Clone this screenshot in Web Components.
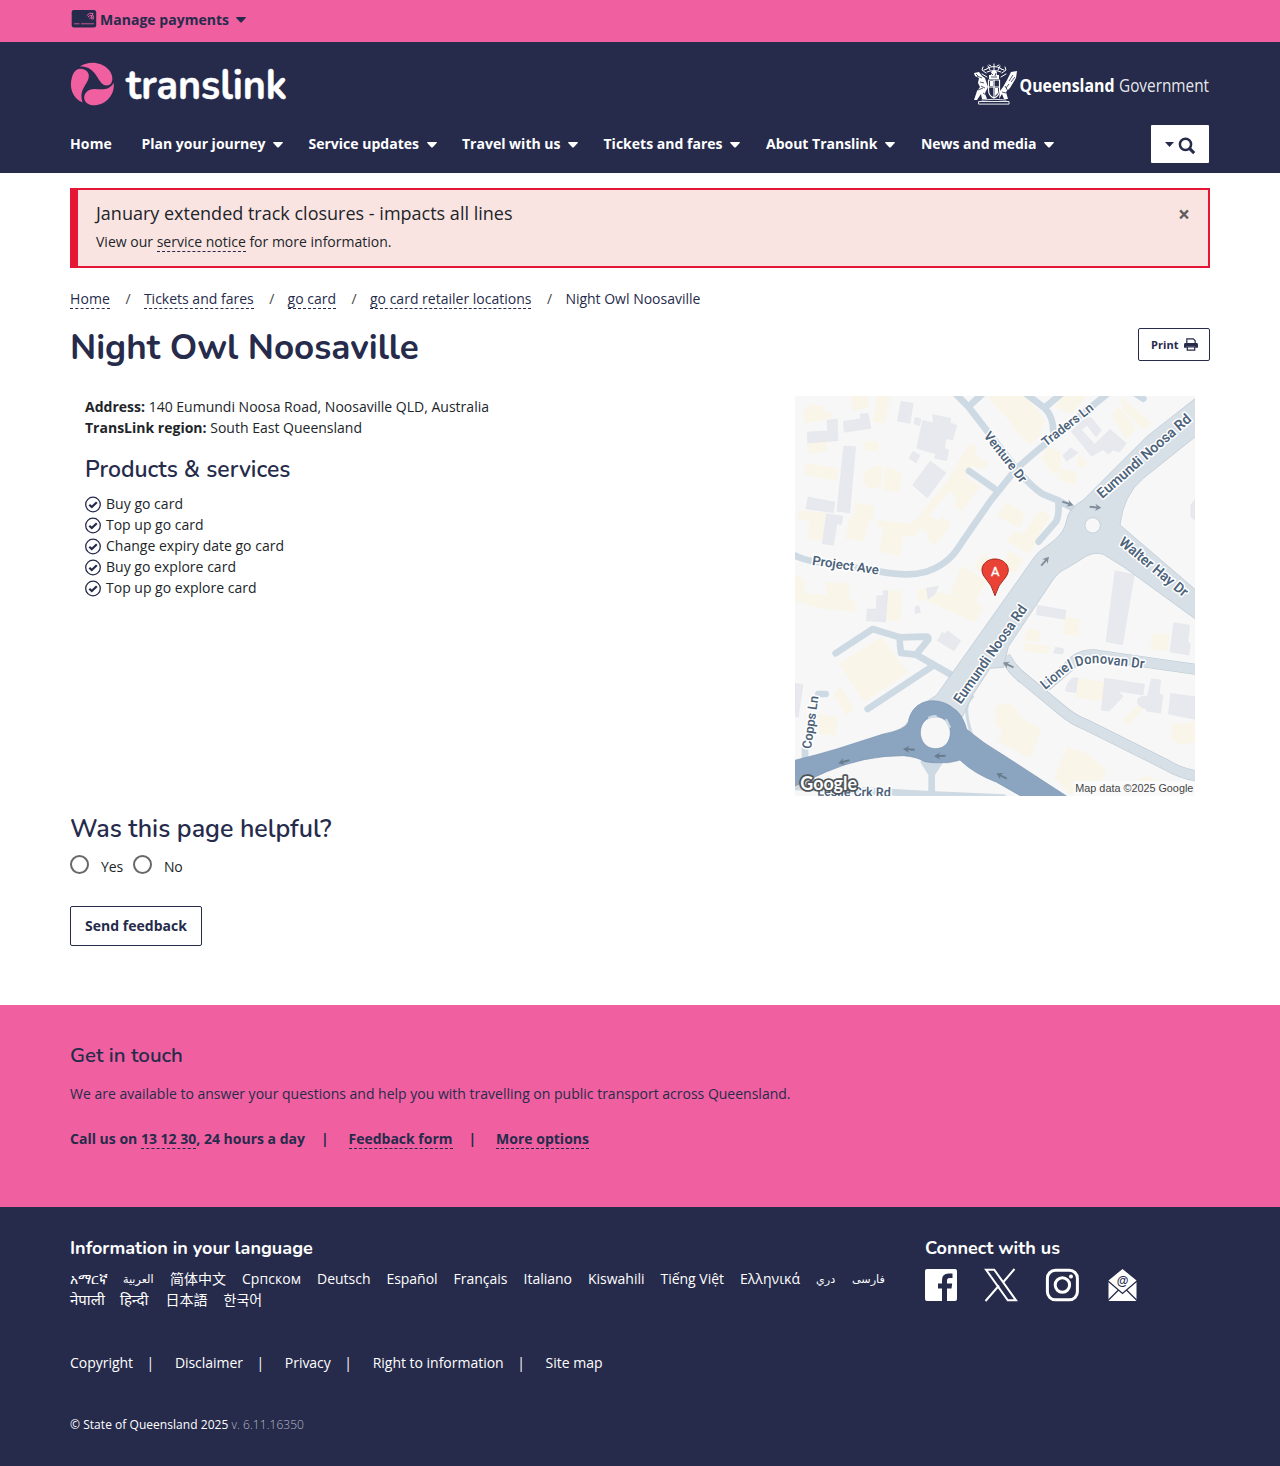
<!DOCTYPE html>
<html lang="en">
<head>
<meta charset="utf-8">
<title>Night Owl Noosaville | Translink</title>
<style>
html,body{margin:0;padding:0}
body{width:1280px;height:1466px;overflow:hidden;background:#fff;color:#212529;font:400 14px/21px "Open Sans","Noto Sans",sans-serif;--navy:#262b4b;--pink:#f060a1;--head:Nunito,Lato,"Open Sans",sans-serif}
main{display:flex;flex-direction:column;width:1140px;padding:15px 70px 0;height:817px}
</style>
</head>
<body>
<tl-topbar></tl-topbar>
<tl-header></tl-header>
<main>
<tl-alert></tl-alert>
<tl-breadcrumbs></tl-breadcrumbs>
<tl-title><tl-text scale w="349">Night Owl Noosaville</tl-text></tl-title>
<tl-store></tl-store>
<tl-feedback></tl-feedback>
</main>
<tl-contact></tl-contact>
<tl-footer></tl-footer>
<script>
const base = `<style>
:host{display:block;box-sizing:border-box}
*{box-sizing:border-box}
a{color:inherit;text-decoration:none}
a.d{border-bottom:1px dashed #262b4b}
.row>a.d{height:21px}
svg{display:block;flex:none;overflow:visible}
h1,h2,h3,p,ul{margin:0;padding:0;list-style:none}
h1,h2,h3{font-family:var(--head);color:var(--navy)}
.row{display:flex}
</style>`;
function define(name, html) {
  customElements.define(name, class extends HTMLElement {
    constructor() { super(); this.attachShadow({mode:'open'}).innerHTML = base + html; }
  });
}
const caret = (c) => `<svg width="10" height="6" viewBox="0 0 10 6"><path fill="${c}" d="M.6 0h8.8q.9.2.3 1L5.800 5.200q-.8.7-1.600 0L.3 1Q-.3.2.6 0z"/></svg>`;

define('tl-topbar', `<style>:host{height:42px;background:var(--pink);padding:9px 70px 0;color:var(--navy);font-weight:700}.row{align-items:flex-start}.card{margin:0 4px 0 2px}.c{margin:8px 0 0 7px}</style>
<div class="row"><svg class="card" width="24" height="19" viewBox="0 0 24 19"><rect x="-.3" y="1" width="24.500" height="17.500" rx="2.200" fill="#262b4b"/><g stroke="#f060a1" fill="none" stroke-width="1"><path d="M2 14.800h5.500M9 14.800h13" opacity=".8"/><path d="M14.800 6.500q2.500-3.500 6.500-2M16 8q2-2.500 4.700-1.200M17.500 9.600q1.200-1.500 2.700-.7M20 4.500q2 2 1.200 6M18.800 6.500q1.700 1.500 1 4"/></g></svg>
<tl-text w="129">Manage payments</tl-text><span class="c">${caret('#262b4b')}</span></div>`);

const nav = [['Home',42,0,29.5],['Plan your journey',124,1,25.5],['Service updates',110.5,1,25.5],['Travel with us',98.5,1,25.5],['Tickets and fares',119,1,26],['About Translink',111.5,1,26],['News and media',115.5,1,0]];
define('tl-header', `<style>:host{height:131px;background:var(--navy);color:#fff;padding:20px 70px 0}
.brands{justify-content:space-between;height:63px}.nav{font-weight:700}.nav .item{display:flex;padding-top:8px;height:29px}.nav .cw{margin:9px 0 0 7.500px}
.search{margin:0 1px 0 auto;width:58px;height:38px;background:#fff;display:flex;border-radius:1px;padding:12px 0 0 13.500px}.search svg:last-child{margin-left:4px}.search .t{margin-top:5px}
text{font-family:"Open Sans",sans-serif;fill:#fff}</style>
<div class="row brands">
<svg width="220" height="46" viewBox="70 62 220 46"><g fill="#f060a1"><path d="M80 66.500C89 60.500 101 62 108 69c4 4 5.800 10 3 14.500-2.500 3-7.500 2.500-10-1C96 76 93 66 80 66.500z"/><path d="M80 68.700C86 68.700 91 73 88 80c-3 7-9 11-5.500 22.500C72 98 69 87 72 77c1.500-5 4-8 8-8.300z"/><path d="M113.700 83C115 95 106 104.500 95 105.300c-5 .3-10.500-2-10.800-7.300-.2-5 4-9 10-9 7 0 14 2.500 19.500-6z"/></g>
<text x="126" y="98.900" style="font-family:Nunito" font-size="41.500" font-weight="700" stroke="#fff" stroke-width=".5" textLength="161" lengthAdjust="spacingAndGlyphs">translink</text></svg>
<svg width="240" height="46" viewBox="970 62 240 46">
<g fill="none" stroke="#fff" stroke-width="1" stroke-linecap="round" stroke-linejoin="round">
<path d="M979 101.500h30v2.600h-30zM982 100q12-1.500 24 0" stroke-width=".9"/>
<path d="M987 68.500q7-4 14 0M987 72q7-3 14 0M994 64v8M988 66l2 4M1000 66l-2 4M983 67l-1 3 4 3M1005 67l1 3-4 3M982 74l5 3M1006 74l-5 3M991 66l-2-1M997 66l2-1M984 70l3-1M1001 69l3 1"/>
<path d="M988.500 80h11v10q0 6-5.500 8-5.500-2-5.500-8zM994 80v17M989 87h10" stroke-width="1.200"/>
</g><g fill="#fff"><path d="M974 73l5-1 3 4 3 2 3 9-3 6 2 6h-5l-1-5-4 6h-3l3-9 3-4-2-4 1-5-4-2zM1011 72l6-1-1 7-6 10-4 4 2 7h-4l-2-5-3 5 1-8 3-4 4-7z"/><path d="M989 75h10v4h-10zM990 81h3v5h-3zM995 88h3v5l-3 3z"/><circle cx="994" cy="73.500" r="3"/></g>
<g stroke="#262b4b" stroke-width=".8" fill="none"><path d="M977 76l5 2M980 82l4 1M978 90l5-2M983 93l3 2M976 74l2 2M981 86l4 2M1013 75l-4 6M1009 84l-3 4M1005 86l3 5M1015 77l-4 5M1002 92l4 1M991 77h6M991 73l2 2M996 73l-1 3"/></g>
<text x="1019.500" y="92" font-size="18" font-weight="700" textLength="95" lengthAdjust="spacingAndGlyphs">Queensland</text><text x="1119" y="92" font-size="18" font-weight="400" fill-opacity=".9" textLength="90" lengthAdjust="spacingAndGlyphs">Government</text></svg>
</div>
<div class="row nav">${nav.map(([t,w,c,g])=>`<a class="item" style="margin-right:${g}px"><tl-text w="${w}">${t}</tl-text>${c?`<span class="cw">${caret('#fff')}</span>`:''}</a>`).join('')}
<div class="search"><svg class="t" width="9" height="6" viewBox="0 0 9 6"><path d="M0 0h9L4.500 5z" fill="#262b4b"/></svg><svg width="19" height="18" viewBox="0 0 19 18" fill="none" stroke="#262b4b" stroke-width="2.500"><circle cx="7.500" cy="7.300" r="5.600"/><path d="M11.500 11.400l4.700 4.700" stroke-width="3"/></svg></div></div>`);

define('tl-alert', `<style>:host{display:flex;height:80px;border:2px solid #e51636;border-left-width:8px;background:#f9e4e2;padding:10px 18px;justify-content:space-between}.h{font-size:18px;line-height:27px;margin-bottom:4px}.x{font:700 21px/29px "Open Sans";color:#635b5d}</style>
<div><p class="h"><tl-text w="416.500">January extended track closures - impacts all lines</tl-text></p><p><tl-text w="295.500">View our <a class="d">service notice</a> for more information.</tl-text></p></div><span class="x">×</span>`);

define('tl-breadcrumbs', `<style>:host{height:37px;padding-top:20px;color:var(--navy)}.s{color:#444;padding-left:15.500px;width:33.900px}</style>
<div class="row"><a class="d"><tl-text w="40">Home</tl-text></a><span class="s">/</span><a class="d"><tl-text w="109.800">Tickets and fares</tl-text></a><span class="s">/</span><a class="d"><tl-text w="48.500">go card</tl-text></a><span class="s">/</span><a class="d"><tl-text w="161.500">go card retailer locations</tl-text></a><span class="s">/</span><tl-text w="135">Night Owl Noosaville</tl-text></div>`);

define('tl-title', `<style>:host{display:flex;justify-content:space-between;height:91px;padding-top:21px}h1{font-size:36px;line-height:40px;font-weight:700;padding-top:2px}.b{display:flex;align-items:center;width:72px;height:33px;margin-top:2px;border:1px solid var(--navy);border-radius:2px;padding-left:12px;font:700 11px/16px "Open Sans";color:var(--navy);gap:5px}</style>
<h1><slot></slot></h1><div class="b"><tl-text w="27.500">Print</tl-text><svg width="14" height="13" viewBox="0 0 15 14"><path d="M3 6V1h7l2 2v3M3.500 9.500h8v3.500h-8z" fill="#fff" stroke="#262b4b" stroke-width="1.300"/><path d="M0 7q0-1.500 1.500-1.500h12q1.500 0 1.500 1.500v3.500h-3V9H3v1.500H0z" fill="#262b4b"/></svg></div>`);

define('tl-store', `<style>:host{display:flex;justify-content:space-between;height:400px;padding:0 15px}b{font-weight:700}h2{font-size:22px;line-height:26px;height:26px;font-weight:600;margin:19px 0 10px}li{display:flex;gap:5px}li svg{margin-top:3px}</style>
<div><p><tl-text w="404"><b>Address:</b> 140 Eumundi Noosa Road, Noosaville QLD, Australia</tl-text></p><p><tl-text w="277"><b>TransLink region:</b> South East Queensland</tl-text></p>
<h2><tl-text scale w="205.500">Products &amp; services</tl-text></h2><ul>${[['Buy go card',77],['Top up go card',97.5],['Change expiry date go card',178],['Buy go explore card',130],['Top up go explore card',150.5]].map(([t,w])=>`<li><svg width="16" height="17" viewBox="0 0 16 17" fill="none" stroke="#262b4b"><circle cx="8" cy="8.500" r="7.300" stroke-width="1.300"/><path d="M4.300 8.800l2.500 2.300 5-4.900" stroke-width="2.200"/></svg><tl-text w="${w}">${t}</tl-text></li>`).join('')}</ul></div><tl-map></tl-map>`);

const arrow = (x,y,a,c='#808e9c') => `<path transform="translate(${x} ${y}) rotate(${a})" fill="${c}" d="M-17-3H4L-1-11 18 0-1 11 4 3H-17z"/>`;
const label = (t,x,y,a,l,s=37) => `<text transform="translate(${x} ${y}) rotate(${a})" font-size="${s}" textLength="${l}" lengthAdjust="spacingAndGlyphs">${t}</text>`;
define('tl-map', `<style>:host{width:400px;height:400px}svg{overflow:hidden}.l text{font-family:Roboto,sans-serif;font-weight:600;fill:#4d637b;stroke:#fff;stroke-width:9;stroke-linejoin:round;paint-order:stroke}</style>
<svg width="400" height="400" viewBox="15 18 1200 1200"><rect x="15" y="18" width="1200" height="1200" fill="#f7f7f7"/>
<g fill="#faf5e9">
<path d="M38 65l25-22 38 6 5 18 20 3-2 18-80 12zM181 18h52l3 34-46 10zM262 18h38l-15 83-36-6zM52 160l60-6-3 30-50 8zM218 157l40-6 8 12-4 20-38-2zM46 220l100 15-6 37-98-18zM232 235l45-8-2 65-43 2-15-25zM288 228l49 20-10 60-48-9zM25 360l80 8-8 87-42-8 2-57-33-3zM195 338l58 10-4 40-12 3-16 63-54-8 10-62 14-2z"/>
<path d="M263 390l100 12 22-22 85-105 70-117 20 15-6 20 40 28-15 17-32-10-17 33 42 26-56 76-25-17 10-15-23-29-60 75 24 16 15-13 28 20-50 65-25-17 8-15-23-19-20 26-36-6-7 65-64-14 12-73-18-1z"/>
<path d="M15 552l32 20-6 36 70 8-5-39 70 3 2 50 20 5-4 30-110-11-69-22zM292 600l44 4-4 91-42-5zM385 600l28-5 12 32-43 5zM515 528l40 20-46 75-27-15zM582 490l18 16-34 40-15-12zM440 605l60 14 43-76 45 30-30 60 22 22-25 42-142-64z"/>
<path d="M600 18h110l55 75-15 43-30 28-53-50-5-18-62-65zM815 18h75l-45 53-50-20zM772 170l42 17-5 63-23 0-32-45zM816 235l45 15-5 35-53-18zM865 190l28 30-10 15-22-10zM990 18l96 83-25 20-60-60zM985 47l52 70-29 30-42-70zM650 335l53 35-15 43-68-35zM748 358l32 20-63 115-67-40 25-32 25 12zM660 482l40 25-21 40-45-15z"/>
<path d="M275 740l78 108-130 88-75-115zM152 888l40 70-23 20-37-64zM84 973l60 8-8 55-56-5zM825 680l45 8-6 50-45-5zM713 718l37 3-3 35-45-5zM706 758l72 10-5 25-70-10zM1090 730l50 6-8 47-52-4zM865 865l78 10-4 60-80-12zM1045 945l15 10-46 50-18-15zM1148 995l25 10 42-13v64l-45 10-28-20zM615 950q55-30 80 35l60 30-33 90-100-52 15-30-20-20zM832 1071l60 20 56 48-30 79h-70l-55-55zM1045 1168l25-10 35 15-2 35h-60z"/></g>
<g fill="#e7e9ee" stroke="#dfe2e8" stroke-width="1">
<path d="M333 34l37 6-10 60-38-7zM376 82l17 5-4 20-17-6zM398 91l31 7v-24l53 11-2 13 21 8-13 44-20-4-4 30 12 4-6 32-36-7 4-13-58-17zM370 184l20 12-12 23-22-15zM421 213l47 35-56 76-44-39zM160 94l52-8-1-14 23-2 9 45-80 12zM111 91l31-4 2 65-91 7-1-33 60-3zM161 168l36 2-18 199-38-5zM54 321l80 15-4 32-82-12zM109 371l50 8-5 25-13-3-11 65-33-5zM260 617h20v-15h14l-7 94-58-4 3-35h27zM410 595l36-7-12 25-20 15zM375 650l12-3 4 20-15 4zM472 722l40 30-20 30-50-30 15-25 8 4z"/>
<path d="M893 81l12 3 29 37-16 20-27-35-17 13 40 44 46-45 49 42-21 27-20-7-12 13-17-14-35 20-60-75 25-26zM842 173l23 15-35 26-12-17zM975 542l58 12-35 210-50-9zM742 646l86 15-4 27-85-14zM797 771l25 6-4 15-28-3zM1151 698l48 7-5 52 7 5-4 33-57-9zM850 864h14l-6 44-32-5q5-31 24-39zM944 864l120 19-5 32-75-11 16 15-42 44-24-2zM1084 866l28 4-4 42 11 2-7 56-43-7v-7q-27-2-27-25 5-15 30-12zM1142 910l73 10v68l-80-16zM1202 345l13-17v62l-12-8z"/><path d="M15 880l24 4-14 97-10-2z"/></g>
<g fill="none" stroke="#cdd9e3" stroke-width="20" stroke-linecap="round" stroke-linejoin="round">
<path d="M5 492Q35 508 65 513L270 545C330 555 370 557 410 545 470 525 495 490 515 458L600 335 680 235 750 175 960 5M537 243l78 54M490 5l45 45 155 200Q735 300 760 313l45 18 45 25M535 50l50-45M700 5l65 50q25 25 25 70M768 50l45-38M805 340q3 35-7 55l-52 60M1038 12l22 14M137 790l111-73 82 25 78-2q10 0 6 10l-36 44-45-5q-6-45-4-47M380 795l105 60M425 830L233 957M85 912h22M45 1075v35M425 1110v100M402 1115l23 37 24-37M0 1190l420 23 220 10"/><path d="M548 920q-18 15-18 40 0 30 17 80" stroke-width="9"/></g>
<g fill="none" stroke-linejoin="round"><path d="M645 800Q670 845 700 865L815 960Q850 990 890 1005L1130 1125Q1180 1155 1230 1158M768 888l70-60Q875 785 930 797L1230 840" stroke="#b9c7d2" stroke-width="33"/><path d="M645 800Q670 845 700 865L815 960Q850 990 890 1005L1130 1125Q1180 1155 1230 1158M768 888l70-60Q875 785 930 797L1230 840" stroke="#d7e0e7" stroke-width="30"/></g>
<path d="M1220 22L1070 140 1000 210 880 330Q835 355 830 390 825 425 790 453L750 483Q740 490 720 520L440 915 395 945 510 990 520 975 545 920 600 835 640 832 655 770 785 575Q805 545 830 535L890 498Q915 485 940 493L1000 530 1220 690V602L990 405Q1000 315 1060 265L1220 137z" fill="#d7e0e7" stroke="#b7c4d0" stroke-width="2"/>
<circle cx="908" cy="406" r="23" fill="#f7f7f7" stroke="#b7c4d0" stroke-width="2"/>
<path fill="#8ba5c1" stroke="#7893b0" stroke-width="2" fill-rule="evenodd" d="M10 1112Q80 1095 140 1077L280 1032Q345 1020 355 995C370 920 450 920 490 955 515 970 525 1000 530 1018Q580 1060 640 1095L840 1225H705L620 1177Q550 1150 510 1110 475 1120 465 1118 430 1120 405 1115 380 1100 340 1097 220 1097 110 1145L10 1190zM436 980c-60 0-60 95 0 96s60-96 0-96z"/>
<path d="M415 984q20-10 25-3M468 988l12 25" stroke="#cdd9e3" stroke-width="7" fill="none"/>
${arrow(833,340,18)}${arrow(916,352,5)}${arrow(765,514,-48)}${arrow(655,825,205)}${arrow(162,1115,164,'#687c8e')}${arrow(357,1078,183,'#687c8e')}${arrow(450,1098,177,'#687c8e')}${arrow(635,1158,207,'#687c8e')}
<g class="l">${label('Venture Dr',580,138,51.8,182,39)}${label('Traders Ln',768,171,-38,184,39)}${label('Eumundi Noosa Rd',937,327,-41.2,358,43)}${label('Eumundi Noosa Rd',512,944,-55,350,43)}${label('Walter Hay Dr',984,461,39.5,254,43)}${label('Project Ave',65,524,8.5,202,39)}${label('Copps Ln',63,1078,-82,160,39)}${label('Leslie Crk Rd',82,1217,1,220,39)}
<path id="ld" d="M766 900L838 840Q880 818 930 820L1070 837" fill="none"/><text font-size="42"><textPath href="#ld" textLength="322" lengthAdjust="spacingAndGlyphs">Lionel Donovan Dr</textPath></text></g>
<path d="M615 617Q606 585 586 564C562 535 585 507 615 507S669 535 645 564Q624 585 615 617z" fill="#ea4335" stroke="#a52714" stroke-width="3"/><text x="616" y="559" text-anchor="middle" font-family="Roboto" font-size="39" font-weight="400" stroke="#fff" stroke-width="1" fill="#fff">A</text>
<text x="31" y="1199" font-family="Lato" font-size="55" font-weight="700" textLength="170" lengthAdjust="spacingAndGlyphs" fill="#fff" stroke="#4e5459" stroke-width="11" paint-order="stroke" stroke-linejoin="round">Google</text>
<path d="M850 1173h365v45H850z" fill="#fafafa"/><text x="856" y="1205" font-family="Liberation Sans" font-size="33" textLength="354" lengthAdjust="spacingAndGlyphs" fill="#444">Map data ©2025 Google</text></svg>`);

define('tl-feedback', `<style>:host{padding-top:18px}h2{font-size:24px;line-height:30px;height:30px;font-weight:600}.r{height:62px;padding-top:11px}.r i{width:19px;height:19px;border:2px solid #686868;border-radius:50%;margin-right:12px}.r tl-text{padding-top:1px;margin-right:10px}.b{width:132px;height:40px;border:1px solid var(--navy);border-radius:2px;padding:8px 14px;font-weight:700;color:var(--navy)}</style>
<h2><tl-text scale w="261.500">Was this page helpful?</tl-text></h2><div class="row r"><i></i><tl-text w="22">Yes</tl-text><i></i><tl-text w="18.500">No</tl-text></div><div class="b"><tl-text w="102">Send feedback</tl-text></div>`);

define('tl-contact', `<style>:host{height:202px;background:var(--pink);color:var(--navy);padding:38px 70px 0}h3{font-size:20px;line-height:24px;height:24px;font-weight:600;margin-bottom:16px}.c{font-weight:700;padding-top:24px}.s{padding-left:16px;width:43.500px}</style>
<h3><tl-text scale w="113">Get in touch</tl-text></h3><p><tl-text w="720.500">We are available to answer your questions and help you with travelling on public transport across Queensland.</tl-text></p>
<div class="row c"><tl-text w="235">Call us on <a class="d">13 12 30</a>, 24 hours a day</tl-text><span class="s">|</span><a class="d"><tl-text w="104">Feedback form</tl-text></a><span class="s">|</span><a class="d"><tl-text w="93">More options</tl-text></a></div>`);

const langs = [['አማርኛ',37],['العربية',31],['简体中文',56],['Српском',59],['Deutsch',53.5],['Español',51],['Français',54],['Italiano',48.5],['Kiswahili',56.5],['Tiếng Việt',63.5],['Ελληνικά',60],['دري',20],['فارسی',31],['नेपाली',34],['हिन्दी',29.5],['日本語',42],['한국어',42]];
define('tl-footer', `<style>:host{height:259px;background:var(--navy);color:#fff;font-weight:400;padding:29px 70px 0}h3{color:#fff;font-size:18px;line-height:24px;font-weight:700;height:24px;margin-bottom:8px}.top{height:116px}.lang{width:855px}.list{display:flex;flex-wrap:wrap;column-gap:16px;width:830px;font-family:"Open Sans","Noto Sans CJK SC","Noto Sans","DejaVu Sans",sans-serif}.list a{white-space:nowrap;height:21px}.list .sm{font-size:11.200px}.list .hi{font-size:15px}.soc{gap:28px}.s{width:41.900px;padding-left:13.500px}.legal{height:64px}.v{font-size:12px;line-height:18px;color:#fff}.v em{font-style:normal;font-weight:300;color:#b8bac5}</style>
<div class="row top"><div class="lang"><h3><tl-text scale w="243">Information in your language</tl-text></h3><div class="list">${langs.map(([t,w],i)=>`<a class="${[1,11,12].includes(i)?'sm':[13,14].includes(i)?'hi':''}" style="width:${w}px">${(i>2&&i<11)?`<tl-text w="${w}">${t}</tl-text>`:t}</a>`).join('')}</div></div>
<div><h3><tl-text scale w="135">Connect with us</tl-text></h3><div class="row soc">
<svg width="32" height="33" viewBox="0 -0.500 32 33"><path d="M2 .5h28q2 0 2 2v28q0 2-2 2h-8V20h4.500l.7-5H22v-3q0-2.500 2.500-2.500h3V5h-4q-6.500 0-6.500 6.500V15h-4v5h4v12.500H2q-2 0-2-2v-28q0-2 2-2z" fill="#fff"/></svg>
<svg width="33" height="33" viewBox="0.500 -0.500 33 33"><path d="M1.500 1.200h8.200l21.800 30.600h-8.200zM30 .5L18 14.500M1 32.500l13.500-15.500" fill="none" stroke="#fff" stroke-width="2"/></svg>
<svg width="33" height="33" viewBox="0.300 -0.300 33 33" fill="none" stroke="#fff" stroke-width="3"><rect x="1.700" y="2" width="30" height="29.500" rx="8"/><circle cx="16.700" cy="16.700" r="7.200"/><circle cx="25.300" cy="8.200" r="2" fill="#fff" stroke="none"/></svg>
<svg width="30" height="33" viewBox="-0.500 -0.500 30 33"><path d="M15 .5L29 12v20.500H1V12z" fill="#fff"/><path d="M.5 12.500L15 25l14.500-12.500M.5 32L11 21.500M29.500 32L19 21.500" fill="none" stroke="#262b4b" stroke-width="1.300"/><text x="15" y="16.500" text-anchor="middle" font-family="Liberation Sans" font-size="12" font-weight="700" fill="#262b4b">@</text></svg></div></div></div>
<div class="row legal"><tl-text w="63">Copyright</tl-text><span class="s">|</span><tl-text w="68">Disclaimer</tl-text><span class="s">|</span><tl-text w="46">Privacy</tl-text><span class="s">|</span><tl-text w="131">Right to information</tl-text><span class="s">|</span><tl-text w="57">Site map</tl-text></div>
<p class="v"><tl-text w="234">© State of Queensland 2025 <em>v. 6.11.16350</em></tl-text></p>`);

/* A single line of text that fills the width given in "w": by its tracking, or by its size when "scale" is set. */
customElements.define('tl-text', class extends HTMLElement {
  constructor() { super(); this.attachShadow({mode:'open'}).innerHTML = '<style>:host{display:inline-block;white-space:nowrap;flex:none}</style><slot></slot>'; }
  connectedCallback() {
    const w = parseFloat(this.getAttribute('w'));
    const natural = this.getBoundingClientRect().width;
    if (!w || !natural) return;
    if (this.hasAttribute('scale')) this.style.fontSize = (parseFloat(getComputedStyle(this).fontSize) * w / natural) + 'px';
    else this.style.letterSpacing = ((w - natural) / [...this.textContent].length) + 'px';
  }
});
</script>
</body>
</html>
